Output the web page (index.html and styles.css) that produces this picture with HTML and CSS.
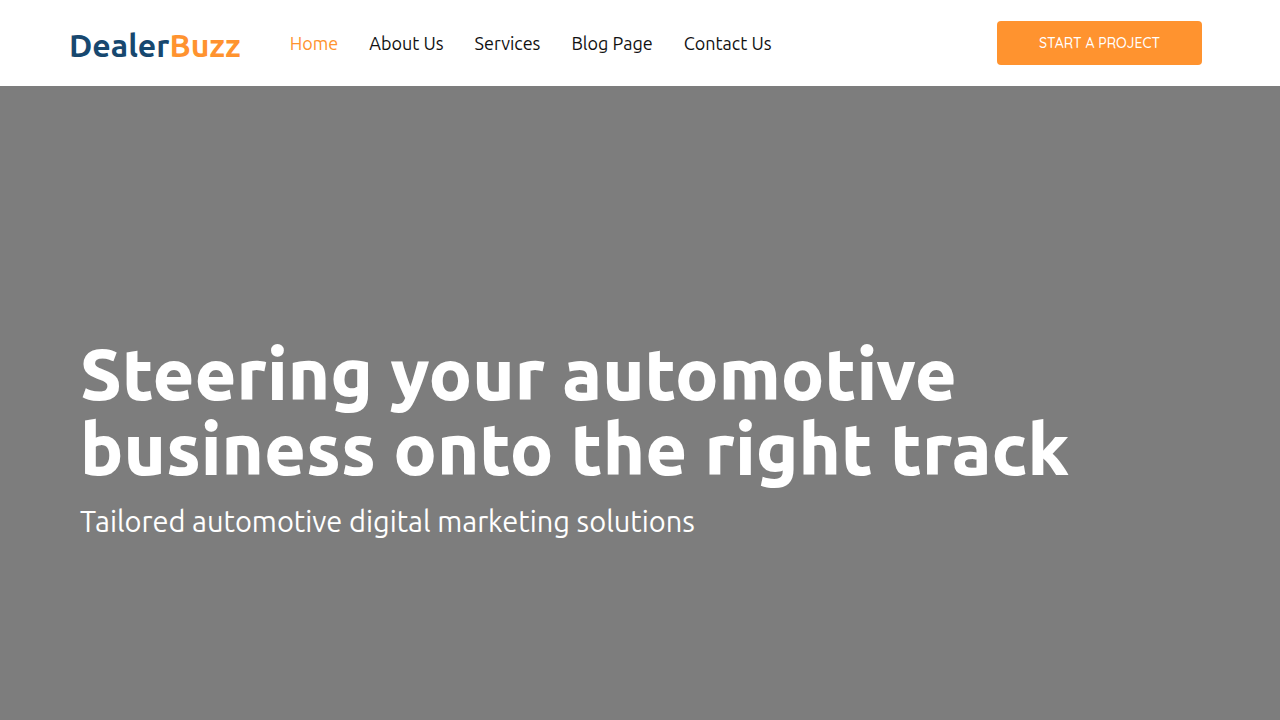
FILE: index.html
```
<!DOCTYPE html>
<html lang="en">
<head>
  <meta charset="UTF-8">
  <meta name="viewport" content="width=device-width, initial-scale=1">
  <title>DealerBuzz</title>
  <link rel="stylesheet" href="styles.css">
</head>
<body>
  <header class="header">
    <a href="#" class="logo">Dealer<span class="logo-accent">Buzz</span></a>
    <nav class="menu">
      <a href="#" class="active">Home</a>
      <a href="#">About Us</a>
      <a href="#">Services</a>
      <a href="#">Blog Page</a>
      <a href="#">Contact Us</a>
    </nav>
    <a href="#" class="btn">START A PROJECT</a>
  </header>
  <main class="hero">
    <div class="hero-content">
      <h1>Steering your automotive business onto the right track</h1>
      <p>Tailored automotive digital marketing solutions</p>
    </div>
  </main>
</body>
</html>
```
FILE: styles.css
```
* {
  box-sizing: border-box;
}
body {
  margin: 0;
  min-height: 100vh;
  display: flex;
  flex-direction: column;
  font-family: Ubuntu, "Noto Sans", sans-serif;
}
a {
  text-decoration: none;
}
.header {
  display: flex;
  align-items: center;
  min-height: 86px;
  padding: 0 78px 0 69px;
  background: #fff;
}
.logo {
  padding-top: 4px;
  color: #17486f;
  font-size: 32px;
  font-weight: 700;
  line-height: 40px;
}
.logo-accent {
  color: #ff932f;
}
.menu {
  display: flex;
  gap: 31px;
  margin-left: 49px;
}
.menu a {
  color: #111;
  font-size: 18px;
  line-height: 24px;
}
.menu a.active {
  color: #ff932f;
}
.btn {
  margin-left: auto;
  padding: 12px 42px;
  border-radius: 4px;
  background: #ff932f;
  color: #fff;
  font-family: Quicksand, Lato, sans-serif;
  font-size: 14px;
  font-weight: 500;
  line-height: 20px;
}
.hero {
  flex: 1;
  display: flex;
  align-items: center;
  padding: 70px 80px 0;
  background: #7d7d7d;
  color: #fff;
}
.hero-content {
  max-width: 1120px;
}
h1 {
  max-width: 1040px;
  margin: 0 0 15px;
  font-size: 72px;
  font-weight: 800;
  line-height: 75px;
}
p {
  margin: 0;
  font-size: 29px;
  line-height: 40px;
}
```
